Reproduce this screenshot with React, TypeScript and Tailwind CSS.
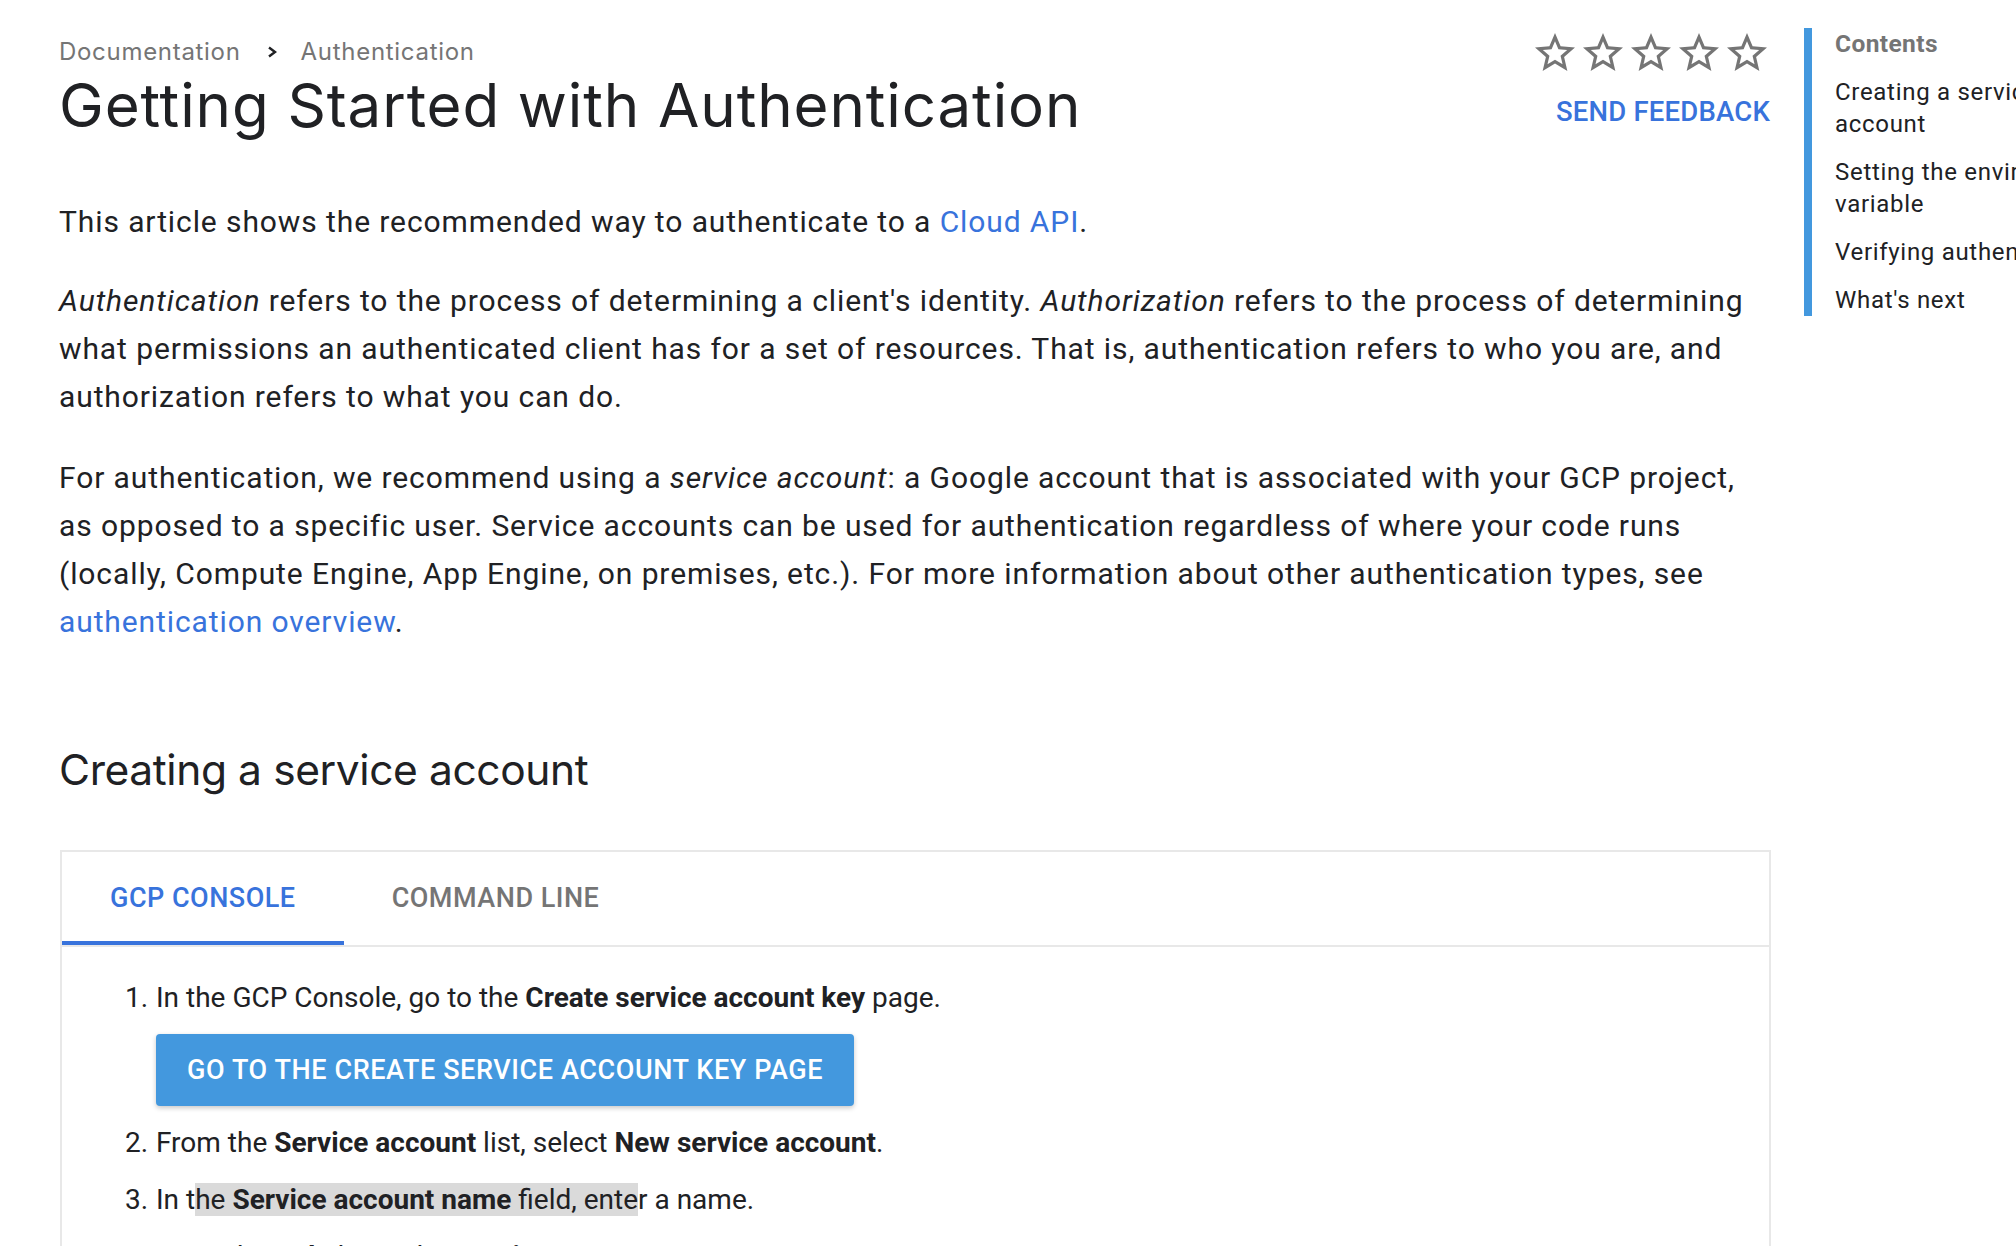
import React from "react";

const Star = () => (
  <svg width="48" height="48" viewBox="0 0 24 24" className="shrink-0">
    <path
      fill="#757575"
      d="M22 9.24l-7.19-.62L12 2 9.19 8.63 2 9.24l5.46 4.73L5.82 21 12 17.27 18.18 21l-1.63-7.03L22 9.24zM12 15.4l-3.76 2.27 1-4.28-3.32-2.88 4.38-.38L12 6.1l1.71 4.04 4.38.38-3.32 2.88 1 4.28L12 15.4z"
    />
  </svg>
);

const Chevron = () => (
  <svg width="10" height="12" viewBox="0 0 10 12" className="shrink-0">
    <polyline points="2,1.5 8,6 2,10.5" fill="none" stroke="#202124" strokeWidth="2.4" />
  </svg>
);

export default function App() {
  return (
    <div className="w-[2016px] h-[1246px] overflow-hidden bg-white text-[#202124] font-[family-name:Roboto,sans-serif]">
      <div className="flex items-start">
        {/* Main column */}
        <main className="w-[1771px] shrink-0 pl-[59px] pt-[29px]">
          {/* Header */}
          <div className="flex items-start justify-between">
            <div className="pt-[7px] font-[family-name:Inter,sans-serif]">
              <div className="flex items-center text-[24px] leading-[32px] tracking-[0.7px] text-[#757575]">
                <span>Documentation</span>
                <span className="ml-[26px] mr-[24px] flex items-center">
                  <Chevron />
                </span>
                <span>Authentication</span>
              </div>
              <h1 className="mt-[1px] text-[60px] leading-[72px] tracking-[0.9px] font-normal text-[#202124]">
                Getting Started with Authentication
              </h1>
            </div>
            <div className="flex flex-col items-end">
              <div className="flex">
                <Star />
                <Star />
                <Star />
                <Star />
                <Star />
              </div>
              <div className="mt-[19px] mr-[1px] text-[27.5px] leading-[32px] font-medium text-[#3873dc] tracking-[0.2px]">
                SEND FEEDBACK
              </div>
            </div>
          </div>

          {/* Body */}
          <div className="mt-[57px] text-[30px] leading-[48px] tracking-[0.9px]">
            <p className="mb-[31px]">
              This article shows the recommended way to authenticate to a{" "}
              <span className="text-[#3873dc]">Cloud API</span>.
            </p>
            <p className="mb-[33px]">
              <em>Authentication</em> refers to the process of determining a client's identity.{" "}
              <em>Authorization</em> refers to the process of determining what permissions an
              authenticated client has for a set of resources. That is, authentication refers to who
              you are, and authorization refers to what you can do.
            </p>
            <p>
              For authentication, we recommend using a <em>service account</em>: a Google account
              that is associated with your GCP project, as opposed to a specific user. Service
              accounts can be used for authentication regardless of where your code runs (locally,
              Compute Engine, App Engine, on premises, etc.). For more information about other
              authentication types, see{" "}
              <span className="text-[#3873dc]">authentication overview</span>.
            </p>
          </div>

          <h2 className="mt-[96px] font-[family-name:Inter,sans-serif] text-[42.5px] leading-[56px] font-normal tracking-[-0.4px]">
            Creating a service account
          </h2>

          {/* Tabbed box */}
          <div className="mt-[52px] ml-[1px] border-2 border-[#e8e8e8]">
            <div className="flex border-b-2 border-[#e8e8e8]">
              <div className="h-[93px] px-[48px] pt-[4px] flex items-center border-b-4 border-[#3873dc] text-[27px] font-medium text-[#3873dc] tracking-[0.5px]">
                GCP CONSOLE
              </div>
              <div className="h-[93px] px-[48px] pt-[4px] flex items-center border-b-4 border-transparent text-[27px] font-medium text-[#757575] tracking-[0.5px]">
                COMMAND LINE
              </div>
            </div>
            <div className="pt-[31px] pl-[63px] pb-[40px] text-[28px] leading-[40px]">
              <div className="flex">
                <span className="w-[31px] shrink-0">1.</span>
                <div>
                  <div>
                    In the GCP Console, go to the <b className="font-bold">Create service account key</b>{" "}
                    page.
                  </div>
                  <div className="mt-[16px] inline-flex h-[72px] items-center px-[31px] rounded-[4px] bg-[#4398de] text-white text-[27px] font-medium tracking-[0.6px] shadow-[0_2px_5px_rgba(0,0,0,0.22)]">
                    GO TO THE CREATE SERVICE ACCOUNT KEY PAGE
                  </div>
                </div>
              </div>
              <div className="flex mt-[17px]">
                <span className="w-[31px] shrink-0">2.</span>
                <div>
                  From the <b className="font-bold">Service account</b> list, select{" "}
                  <b className="font-bold">New service account</b>.
                </div>
              </div>
              <div className="flex mt-[17px]">
                <span className="w-[31px] shrink-0">3.</span>
                <div>
                  In t
                  <span className="bg-[#dadada]">
                    he <b className="font-bold">Service account name</b> field, ente
                  </span>
                  r a name.
                </div>
              </div>
              <div className="flex mt-[17px]">
                <span className="w-[31px] shrink-0">4.</span>
                <div>
                  From the <b className="font-bold">Role</b> list, select{" "}
                  <b className="font-bold">Project &gt; Owner</b>.
                </div>
              </div>
            </div>
          </div>
        </main>

        {/* Table of contents */}
        <aside className="ml-[33px] mt-[28px] shrink-0 border-l-[8px] border-[#4398de] pl-[23px] w-[320px]">
          <div className="w-[285px] text-[24px] leading-[32px] tracking-[0.7px] flex flex-col gap-[16px]">
            <div className="text-[24.5px] font-bold tracking-[0.4px] text-[#757575]">Contents</div>
            <div>Creating a service account</div>
            <div>Setting the environment variable</div>
            <div>Verifying authentication</div>
            <div>What's next</div>
          </div>
        </aside>
      </div>
    </div>
  );
}
